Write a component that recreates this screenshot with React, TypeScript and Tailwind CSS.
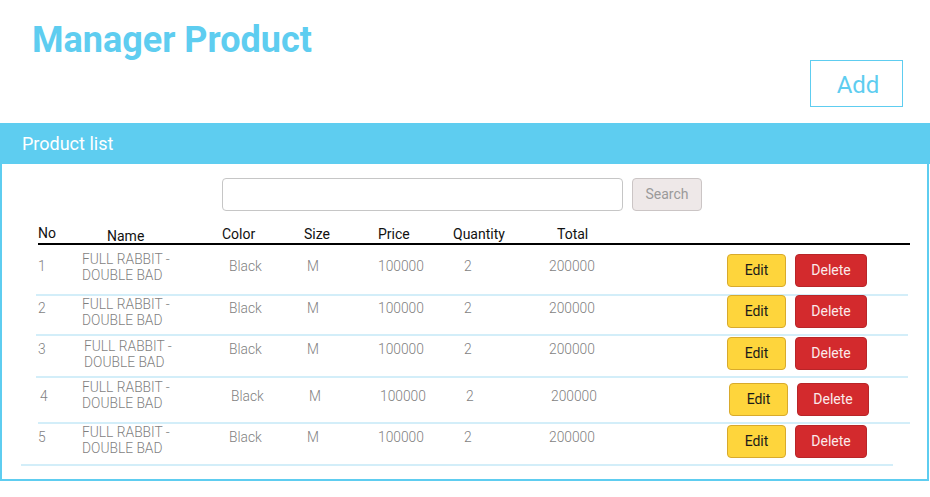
import React from "react";

type RowProps = {
  n: string;
  h: string;
  noCls: string;
  nameCls: string;
  nameW: string;
  valCls: string;
  btnCls: string;
  sepCls: string;
};

function Row({ n, h, noCls, nameCls, nameW, valCls, btnCls, sepCls }: RowProps) {
  return (
    <>
      <div className={`flex items-start ml-[36px] ${h}`}>
        <div className={`w-[44px] ${valCls} ${noCls}`}>{n}</div>
        <div className={`${nameW} ${nameCls} text-[13.8px] leading-[16px] font-light text-[#7f7f7f]`}>
          <div>FULL RABBIT -</div>
          <div>DOUBLE BAD</div>
        </div>
        <div className={`w-[78px] ${valCls}`}>Black</div>
        <div className={`w-[71px] ${valCls}`}>M</div>
        <div className={`w-[86px] ${valCls}`}>100000</div>
        <div className={`w-[85px] ${valCls}`}>2</div>
        <div className={`w-[178px] ${valCls}`}>200000</div>
        <button
          className={`w-[59px] h-[33px] rounded-[4px] border border-[#d8aa2c] bg-[#fed53c] text-[14px] text-[#1a1a1a] flex items-center justify-center ${btnCls}`}
        >
          Edit
        </button>
        <button
          className={`ml-[9px] w-[72px] h-[33px] rounded-[4px] border border-[#b82528] bg-[#d32a2d] text-[14px] text-[#fbeaea] flex items-center justify-center ${btnCls}`}
        >
          Delete
        </button>
      </div>
      <div className={`h-[2px] w-[872px] bg-[#d3eef9] ${sepCls}`} />
    </>
  );
}

export default function App() {
  const val = "text-[13.8px] leading-[16px] font-light text-[#7f7f7f]";
  return (
    <div className="w-[930px] h-[497px] bg-white font-[Roboto,sans-serif] overflow-hidden">
      <div className="h-[123px] flex flex-col">
        <div className="pt-[20px] pl-[32px] text-[36px] leading-[40px] font-bold text-[#5ecdf0]">
          Manager Product
        </div>
        <div className="flex justify-end pr-[27px]">
          <button className="w-[93px] h-[47px] border border-[#5ecdf0] text-[24px] text-[#5ecdf0] flex items-center justify-center pl-[3px] pt-[2px]">
            Add
          </button>
        </div>
      </div>
      <div className="h-[41px] bg-[#5ecdf0] flex items-center pl-[22px] text-[18px] leading-[24px] text-white">
        Product list
      </div>
      <div className="w-[929px] h-[317px] border-x-2 border-b-2 border-[#5ecdf0]">
        <div className="flex pt-[14px]">
          <input
            className="ml-[220px] w-[401px] h-[33px] rounded-[4px] border border-[#c6c6c6] bg-white outline-none"
            type="text"
          />
          <button className="ml-[9px] w-[70px] h-[33px] rounded-[4px] border border-[#cbc5c5] bg-[#eee8e8] text-[14px] text-[#9a9a9a] flex items-center justify-center">
            Search
          </button>
        </div>
        <div className="flex items-start ml-[36px] mt-[13px] h-[19px] text-[14px] leading-[20px] text-[#111]">
          <div className="w-[69px] -mt-[1px]">No</div>
          <div className="w-[115px] mt-[2px]">Name</div>
          <div className="w-[82px]">Color</div>
          <div className="w-[74px]">Size</div>
          <div className="w-[75px]">Price</div>
          <div className="w-[104px]">Quantity</div>
          <div>Total</div>
        </div>
        <div className="ml-[36px] w-[872px] h-[2px] bg-black" />
        <Row
          n="1"
          h="h-[49px]"
          noCls=""
          nameCls="mt-[6px]"
          nameW="w-[147px]"
          valCls={`${val} mt-[13px]`}
          btnCls="mt-[9px]"
          sepCls="ml-[34px]"
        />
        <Row
          n="2"
          h="h-[38px]"
          noCls=""
          nameCls="mt-[0px]"
          nameW="w-[147px]"
          valCls={`${val} mt-[4px]`}
          btnCls="-mt-[1px]"
          sepCls="ml-[34px]"
        />
        <Row
          n="3"
          h="h-[40px]"
          noCls=""
          nameCls="mt-[2px] pl-[2px]"
          nameW="w-[147px]"
          valCls={`${val} mt-[5px]`}
          btnCls="mt-[1px]"
          sepCls="ml-[34px]"
        />
        <Row
          n="4"
          h="h-[44px]"
          noCls="pl-[2px]"
          nameCls="mt-[1px]"
          nameW="w-[149px]"
          valCls={`${val} mt-[10px]`}
          btnCls="mt-[5px]"
          sepCls="ml-[36px]"
        />
        <Row
          n="5"
          h="h-[40px]"
          noCls=""
          nameCls="mt-[0px]"
          nameW="w-[147px]"
          valCls={`${val} mt-[5px]`}
          btnCls="mt-[1px]"
          sepCls="ml-[19px]"
        />
      </div>
    </div>
  );
}
